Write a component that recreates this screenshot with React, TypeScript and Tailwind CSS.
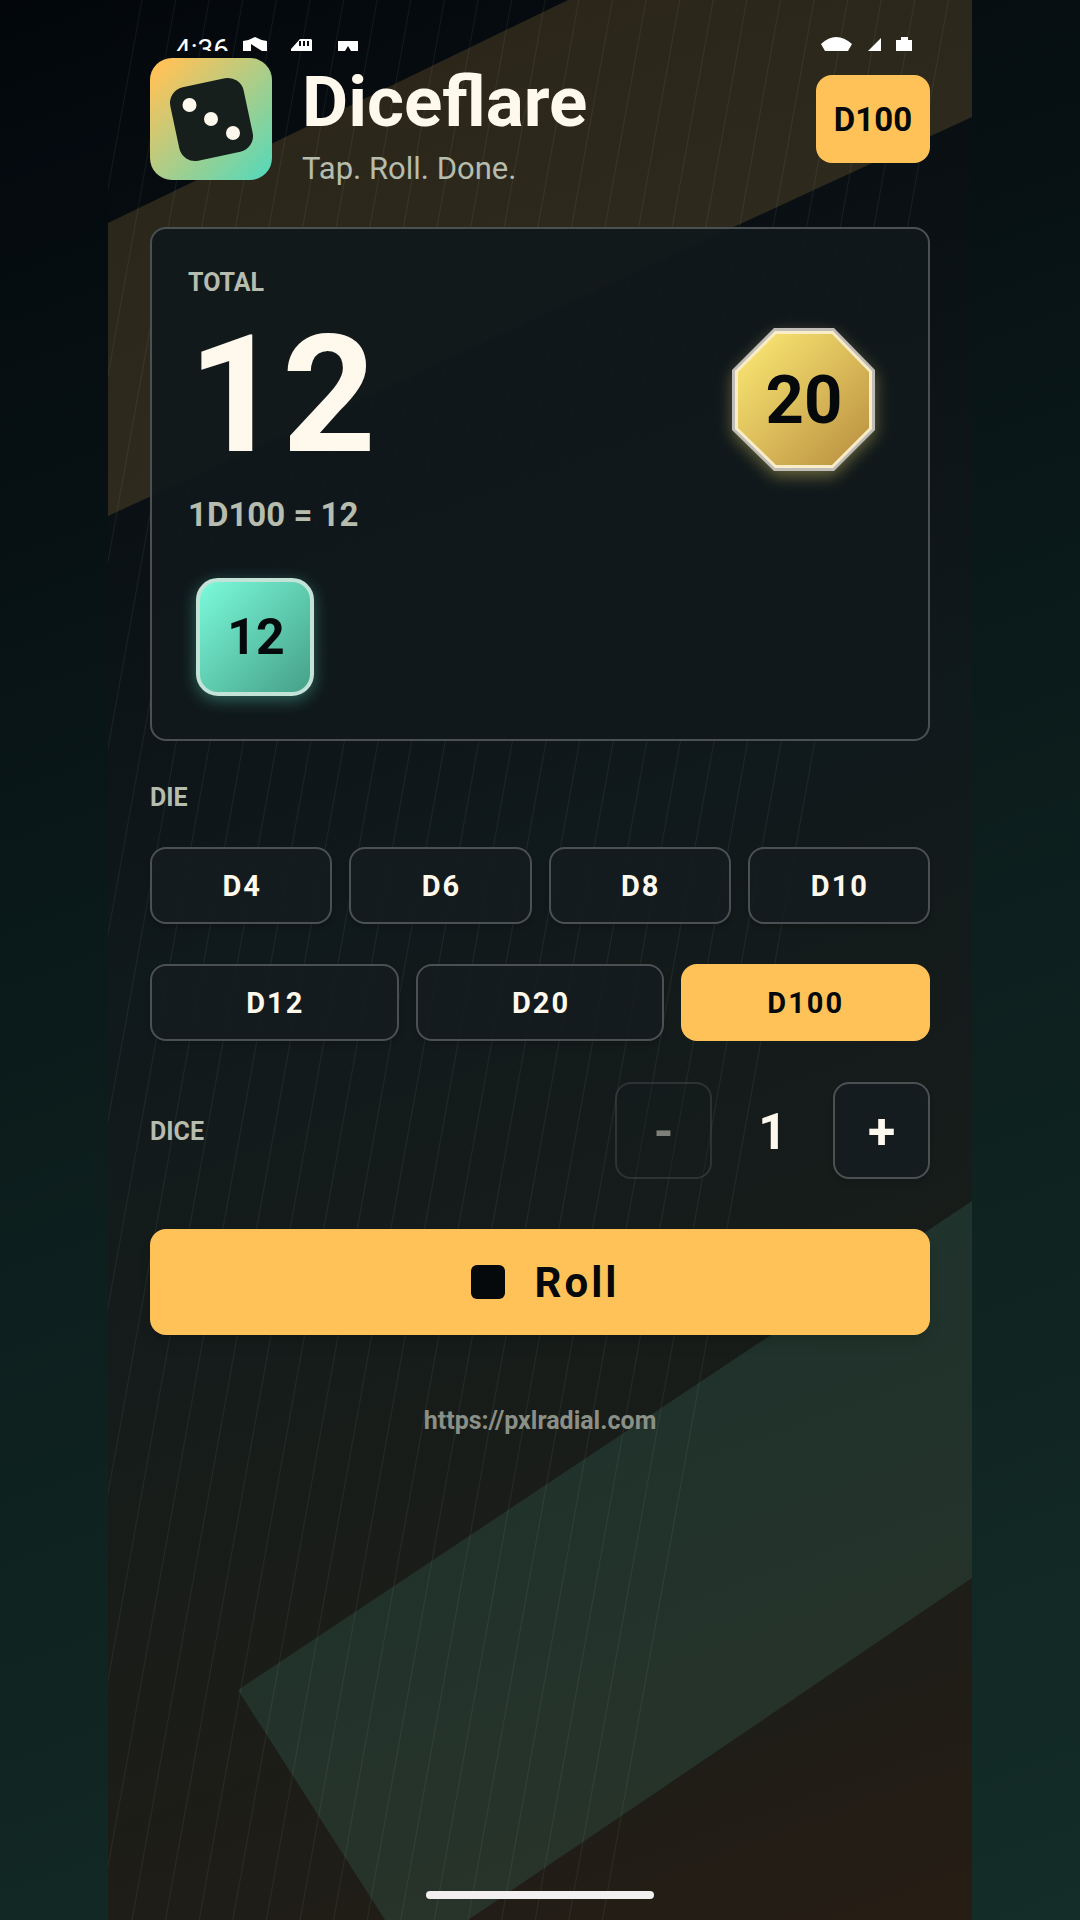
import { useState } from "react";

const topRow = [4, 6, 8, 10];
const bottomRow = [12, 20, 100];
const MAX_DICE = 12;

// Slanted hairlines behind the whole screen
const hairlines = Array.from({ length: 25 }, (_, i) => 34 + i * 33.6);

function Backdrop() {
  return (
    <svg
      className="absolute inset-0 h-full w-full"
      viewBox="0 0 864 1920"
      preserveAspectRatio="none"
      aria-hidden="true"
    >
      <polygon points="0,223 460,0 864,0 864,117 0,516" fill="#ffc258" fillOpacity="0.15" />
      <polygon points="864,1201 130,1690 277,1920 360,1920 864,1578" fill="#5ad8b7" fillOpacity="0.12" />
      {hairlines.map((x) => (
        <line key={x} x1={x} y1="0" x2={x - 346} y2="1920" stroke="#fff" strokeOpacity="0.06" strokeWidth="1.2" />
      ))}
    </svg>
  );
}

function StatusBar() {
  return (
    <div className="flex h-11 items-start justify-between pt-9 pr-[17px] pl-[25px] text-white" aria-hidden="true">
      <div className="flex h-[15px] items-start gap-3 overflow-hidden">
        <span className="w-[56px] text-[28px] leading-7">4:36</span>
        <svg className="h-[15px] w-[118px]" viewBox="0 0 118 15" fill="currentColor">
          <path d="M0 5Q7 4 12 1q5 3 12 4v10H19L8 8v7H0z" />
          <path fillRule="evenodd" d="M57 3h11l1 1v11H48v-2zM56 5v5h2V5zm4 0v5h2V5zm4 0v5h2V5z" />
          <path d="M95 5h20v10h-7l-3-5-3 5h-7z" />
        </svg>
      </div>
      <svg className="h-[15px] w-[92px]" viewBox="0 0 92 15" fill="currentColor">
        <path d="M0 8Q15-6 31 8l-4 7H4z" />
        <path d="M60 2v13H47z" />
        <path d="M80 1h7v3h4v11H75V4h5z" />
      </svg>
    </div>
  );
}

function Logo() {
  return (
    <svg className="size-[122px] shrink-0" viewBox="0 0 122 122" aria-hidden="true">
      <defs>
        <linearGradient id="logo" x1="0" y1="0" x2="1" y2="1">
          <stop offset="0.08" stopColor="#ffc258" />
          <stop offset="0.95" stopColor="#5ad8b7" />
        </linearGradient>
      </defs>
      <rect width="122" height="122" rx="22" fill="url(#logo)" />
      <rect x="24" y="24" width="75" height="75" rx="16" fill="#161f1c" transform="rotate(-12 61.500 61.500)" />
      <circle cx="39.500" cy="47" r="7" fill="#fff9ed" />
      <circle cx="61" cy="61" r="7" fill="#fff9ed" />
      <circle cx="83" cy="75" r="7" fill="#fff9ed" />
    </svg>
  );
}

function GoldDie() {
  return (
    <div className="relative mt-[10px] flex size-[144px] items-center justify-center">
      <svg className="absolute inset-0 h-full w-full overflow-visible" viewBox="0 0 144 144" aria-hidden="true">
        <defs>
          <linearGradient id="gold" x1="0" y1="0" x2="1" y2="1">
            <stop offset="0.15" stopColor="#f3dd6d" />
            <stop offset="0.85" stopColor="#c39b47" />
          </linearGradient>
          <filter id="goldGlow" x="-30%" y="-30%" width="160%" height="160%">
            <feGaussianBlur stdDeviation="8" />
          </filter>
        </defs>
        <polygon points="43,6 101,6 143,48 143,106 101,148 43,148 1,106 1,48" fill="#f3dd6d" opacity="0.4" filter="url(#goldGlow)" />
        <polygon points="42,0 102,0 143,42 143,102 102,143 42,143 0,102 0,42" fill="#c0bdb8" />
        <polygon points="43,3 101,3 140,43 140,101 101,140 43,140 3,101 3,43" fill="#faedc8" />
        <polygon points="44,6 100,6 137,44 137,100 100,137 44,137 6,100 6,44" fill="url(#gold)" />
      </svg>
      <span className="relative text-[67px] leading-none font-bold text-[#05090c]">20</span>
    </div>
  );
}

interface DieButtonProps {
  sides: number;
  selected: boolean;
  onSelect: (sides: number) => void;
}

function DieButton({ sides, selected, onSelect }: DieButtonProps) {
  return (
    <button
      type="button"
      aria-pressed={selected}
      onClick={() => onSelect(sides)}
      className={
        selected
          ? "h-[77px] rounded-2xl bg-[#ffc258] pt-[2px] text-[29px] font-bold tracking-[2px] text-[#05090c]"
          : "h-[77px] rounded-2xl border-2 border-[#4b5053] bg-[#151c20]/90 pt-[2px] pl-[2px] text-[29px] font-bold tracking-[2px] text-[#fff9ed] shadow-md"
      }
    >
      D{sides}
    </button>
  );
}

export default function App() {
  const [sides, setSides] = useState(100);
  const [count, setCount] = useState(1);
  const [rolls, setRolls] = useState([12]);
  const total = rolls.reduce((sum, n) => sum + n, 0);

  const roll = () => setRolls(Array.from({ length: count }, () => 1 + Math.floor(Math.random() * sides)));

  return (
    <div className="flex min-h-screen justify-center bg-[linear-gradient(160deg,#03070c_0%,#0c1d1c_50%,#142d28_100%)] font-['Roboto',sans-serif]">
      <div className="relative flex min-h-screen w-4/5 flex-col overflow-hidden bg-[linear-gradient(160deg,#04080d_0%,#10191b_45%,#161c1a_65%,#1f1d17_88%,#271d14_100%)] px-[42px]">
        <Backdrop />

        <div className="relative flex flex-1 flex-col">
          <StatusBar />

          {/* Header */}
          <header className="flex items-center">
            <Logo />
            <div className="ml-[30px] flex-1 pt-4">
              <h1 className="text-[71px] leading-[84px] font-bold text-[#fff9ed]">Diceflare</h1>
              <p className="text-[31px] leading-[50px] text-[#b6bcae]">Tap. Roll. Done.</p>
            </div>
            <div className="flex h-[88px] w-[114px] items-center justify-center rounded-2xl bg-[#ffc258] pt-[2px] text-[33px] font-bold text-[#05090c]">
              D{sides}
            </div>
          </header>

          {/* Result */}
          <section className="mt-[33px] rounded-2xl border-2 border-[#4b5053] bg-[#11181b]/95 px-9 pt-9 pb-[43px]">
            <h2 className="text-[25px] leading-9 font-bold text-[#b6bcae]">TOTAL</h2>
            <div className="flex items-center justify-between pr-[16px]">
              <output className="text-[164px] leading-[188px] font-bold text-[#fff9ed]">{total}</output>
              <GoldDie />
            </div>
            <p className="mt-[6px] text-[33px] leading-10 font-bold text-[#b6bcae]">
              {rolls.length}D{sides} = {total}
            </p>
            <div className="mt-[43px] flex flex-wrap gap-4 px-2">
              {rolls.map((value, i) => (
                <div
                  key={i}
                  className="flex size-[118px] items-center justify-center rounded-[22px] border-4 border-[#c3e3d9] bg-linear-135 from-[#7bfadb] to-[#45a188] pl-[2px] text-[50px] font-bold text-[#05090c] shadow-[0_4px_16px_rgba(90,216,183,0.4)]"
                >
                  {value}
                </div>
              ))}
            </div>
          </section>

          {/* Die picker */}
          <h2 className="mt-[39px] text-[25px] leading-9 font-bold text-[#b6bcae]">DIE</h2>
          <div className="mt-[31px] grid grid-cols-4 gap-[17px]">
            {topRow.map((n) => (
              <DieButton key={n} sides={n} selected={n === sides} onSelect={setSides} />
            ))}
          </div>
          <div className="mt-10 grid grid-cols-3 gap-[17px]">
            {bottomRow.map((n) => (
              <DieButton key={n} sides={n} selected={n === sides} onSelect={setSides} />
            ))}
          </div>

          {/* Dice count */}
          <div className="mt-[41px] flex items-center">
            <h2 className="flex-1 pt-[2px] text-[25px] leading-9 font-bold text-[#b6bcae]">DICE</h2>
            <button
              type="button"
              aria-label="Fewer dice"
              disabled={count === 1}
              onClick={() => setCount(count - 1)}
              className="size-[97px] rounded-2xl border-2 border-[#4b5053] bg-[#151c20]/60 pt-1 text-[50px] font-bold text-[#fff9ed] disabled:opacity-45"
            >
              -
            </button>
            <span className="w-[121px] pt-1 text-center text-[50px] font-bold text-[#fff9ed]">{count}</span>
            <button
              type="button"
              aria-label="More dice"
              disabled={count === MAX_DICE}
              onClick={() => setCount(count + 1)}
              className="size-[97px] rounded-2xl border-2 border-[#4b5053] bg-[#151c20] pt-1 text-[50px] font-bold text-[#fff9ed] shadow-md disabled:opacity-45"
            >
              +
            </button>
          </div>

          <button
            type="button"
            onClick={roll}
            className="mt-[50px] flex h-[106px] items-center justify-center gap-[30px] rounded-2xl bg-[#ffc258] pl-[10px] text-[42px] font-bold tracking-[3px] text-[#05090c] shadow-lg"
          >
            <span className="size-[34px] rounded-md bg-[#05090c]" />
            Roll
          </button>

          <a href="https://pxlradial.com" className="mx-auto mt-[68px] text-[25px] leading-9 font-bold text-[#8b9087]">
            https://pxlradial.com
          </a>

          <div className="mx-auto mt-auto mb-[21px] h-2 w-[228px] rounded-full bg-[#f2eff0]" />
        </div>
      </div>
    </div>
  );
}
